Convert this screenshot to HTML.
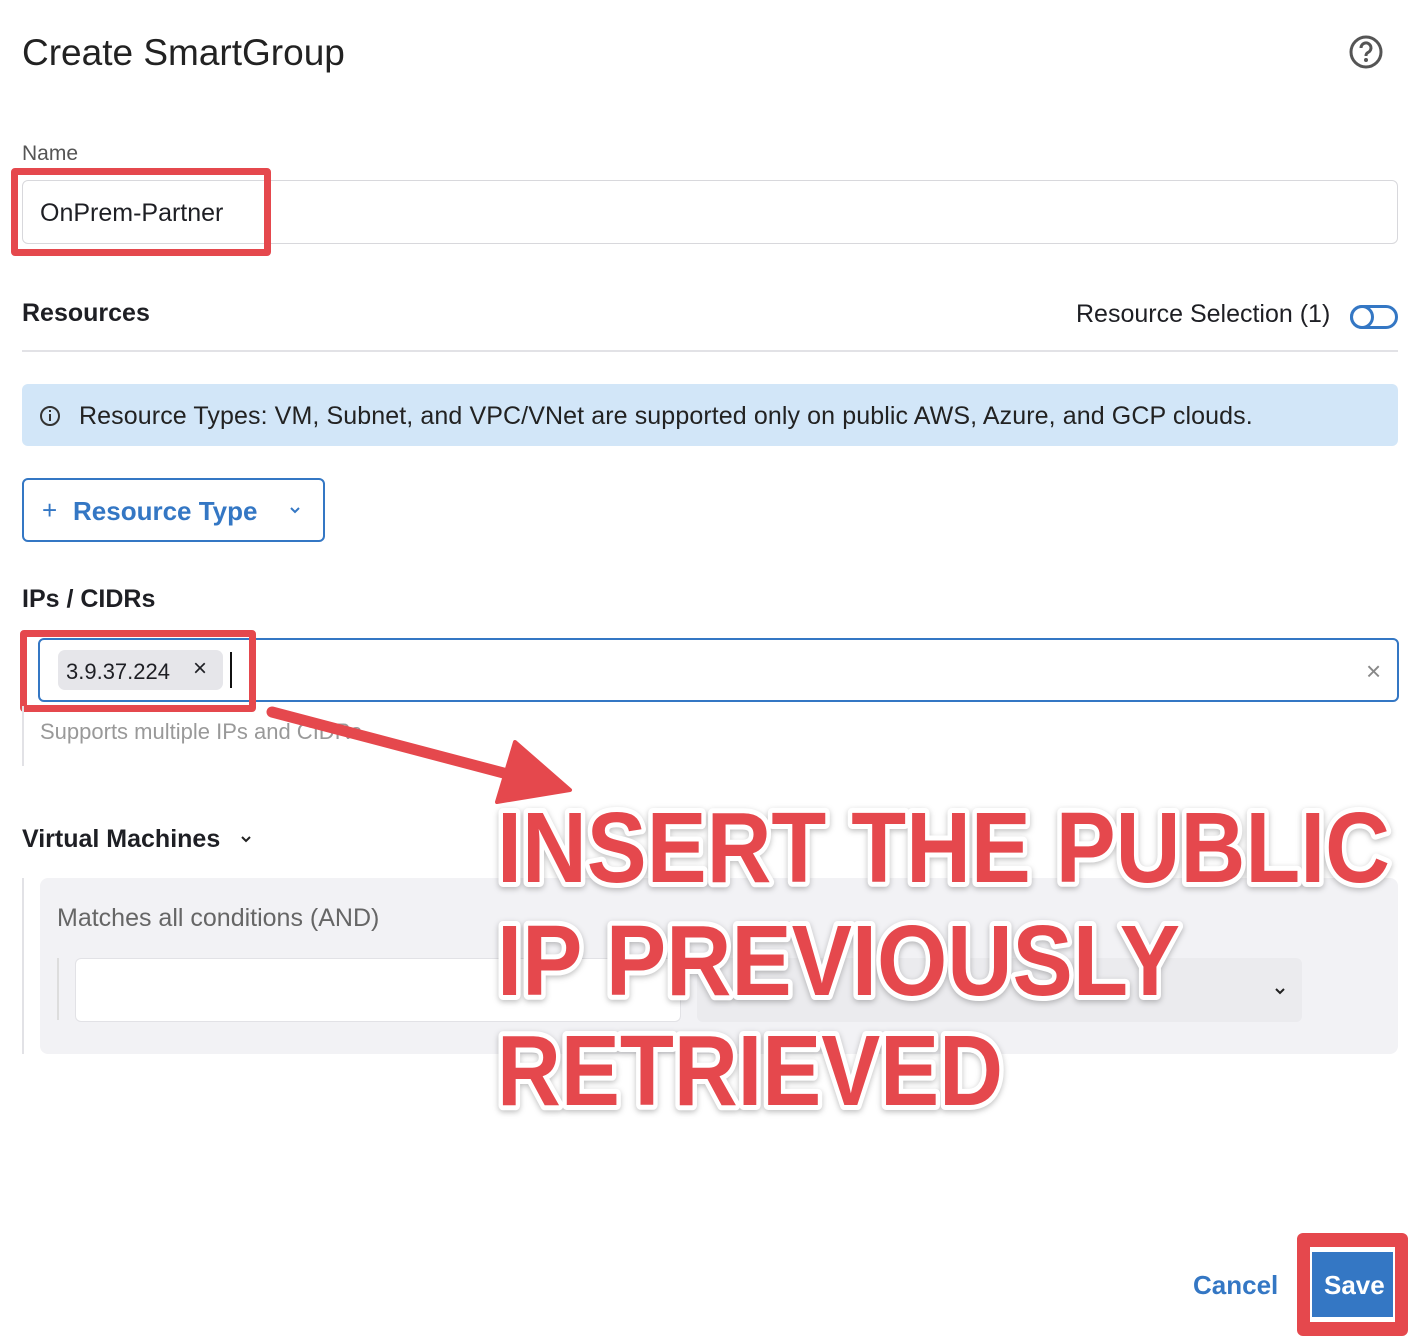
<!DOCTYPE html>
<html><head><meta charset="utf-8"><style>
body{margin:0;width:1414px;height:1336px;background:#fff;font-family:"Liberation Sans",sans-serif;color:#1e1f24;position:relative;overflow:hidden}
.a{position:absolute}
</style></head><body>
<div class="a" style="left:22px;top:32px;font-size:37px;color:#222">Create SmartGroup</div>
<svg class="a" style="left:1348px;top:34px" width="36" height="36" viewBox="0 0 36 36"><circle cx="18" cy="18" r="15" fill="none" stroke="#555" stroke-width="3"/><path d="M13 14a5 5 0 1 1 7 4.5c-1.5.8-2 1.5-2 3.5" fill="none" stroke="#555" stroke-width="3"/><circle cx="18" cy="26" r="2" fill="#555"/></svg>
<div class="a" style="left:22px;top:142px;font-size:21px;color:#555">Name</div>
<div class="a" style="left:22px;top:180px;width:1374px;height:62px;border:1.5px solid #d8d8dc;border-radius:6px"></div>
<div class="a" style="left:11px;top:168px;width:246px;height:74px;border:7px solid #e5484d;border-radius:4px"></div>
<div class="a" style="left:40px;top:199px;font-size:25px">OnPrem-Partner</div>
<div class="a" style="left:22px;top:299px;font-size:25px;font-weight:bold">Resources</div>
<div class="a" style="left:1076px;top:300px;font-size:25px">Resource Selection (1)</div>
<div class="a" style="left:1350px;top:305px;width:42px;height:18px;border:3px solid #3477c4;border-radius:12px"></div>
<div class="a" style="left:1350px;top:305px;width:18px;height:18px;border:3px solid #3477c4;border-radius:50%"></div>
<div class="a" style="left:22px;top:350px;width:1376px;height:2px;background:#e2e2e6"></div>
<div class="a" style="left:22px;top:384px;width:1376px;height:62px;background:#d2e6f8;border-radius:6px"></div>
<svg class="a" style="left:39px;top:405px" width="22" height="22"><circle cx="11" cy="11" r="9" fill="none" stroke="#333" stroke-width="2"/><rect x="10" y="9" width="2" height="7" fill="#333"/><rect x="10" y="5" width="2" height="2" fill="#333"/></svg>
<div class="a" style="left:79px;top:402px;font-size:25px;color:#222;letter-spacing:0.1px">Resource Types: VM, Subnet, and VPC/VNet are supported only on public AWS, Azure, and GCP clouds.</div>
<div class="a" style="left:22px;top:478px;width:299px;height:60px;border:2px solid #3477c4;border-radius:6px"></div>
<div class="a" style="left:42px;top:495px;font-size:26px;color:#3477c4">+</div>
<div class="a" style="left:73px;top:496px;font-size:26px;color:#3477c4;font-weight:bold">Resource Type</div>
<svg class="a" style="left:289px;top:505px" width="12" height="10"><path d="M2 3l4 4 4-4" fill="none" stroke="#3477c4" stroke-width="2"/></svg>
<div class="a" style="left:22px;top:585px;font-size:25px;font-weight:bold">IPs / CIDRs</div>
<div class="a" style="left:38px;top:638px;width:1357px;height:60px;border:2px solid #3477c4;border-radius:6px"></div>
<div class="a" style="left:58px;top:650px;width:165px;height:40px;background:#e6e6ea;border-radius:7px"></div>
<div class="a" style="left:66px;top:659px;font-size:22px">3.9.37.224</div>
<div class="a" style="left:193px;top:655px;font-size:24px">×</div>
<div class="a" style="left:230px;top:652px;width:2px;height:36px;background:#111"></div>
<div class="a" style="left:1366px;top:656px;font-size:26px;color:#888">×</div>
<div class="a" style="left:20px;top:630px;width:222px;height:68px;border:7px solid #e5484d;border-radius:4px"></div>
<div class="a" style="left:22px;top:706px;width:2px;height:60px;background:#e2e2e6"></div>
<div class="a" style="left:40px;top:719px;font-size:22px;color:#999">Supports multiple IPs and CIDRs</div>
<div class="a" style="left:22px;top:825px;font-size:25px;font-weight:bold">Virtual Machines</div>
<svg class="a" style="left:240px;top:834px" width="12" height="10"><path d="M2 3l4 4 4-4" fill="none" stroke="#222" stroke-width="2"/></svg>
<div class="a" style="left:22px;top:878px;width:2px;height:176px;background:#e2e2e6"></div>
<div class="a" style="left:40px;top:878px;width:1358px;height:176px;background:#f2f2f5;border-radius:8px"></div>
<div class="a" style="left:57px;top:904px;font-size:25px;color:#666">Matches all conditions (AND)</div>
<div class="a" style="left:57px;top:958px;width:2px;height:62px;background:#ddd"></div>
<div class="a" style="left:75px;top:958px;width:604px;height:62px;background:#fff;border:1.5px solid #e2e2e6;border-radius:6px"></div>
<div class="a" style="left:697px;top:958px;width:605px;height:64px;background:#ebebee;border-radius:6px"></div>
<svg class="a" style="left:1274px;top:986px" width="12" height="10"><path d="M2 3l4 4 4-4" fill="none" stroke="#222" stroke-width="2"/></svg>
<svg class="a" style="left:0;top:0" width="1414" height="1336">
<line x1="272" y1="712" x2="515" y2="776" stroke="#e5484d" stroke-width="11" stroke-linecap="round"/>
<polygon points="497,802 515,742 570,790" fill="#e5484d" stroke="#e5484d" stroke-width="4" stroke-linejoin="round"/>
<g font-family="Liberation Sans,sans-serif" font-weight="bold" font-size="100" fill="#e5484d" stroke="#fff" stroke-width="10" paint-order="stroke" stroke-linejoin="round" style="filter:drop-shadow(0 2px 3px rgba(0,0,0,.25))">
<text x="497" y="882" textLength="893" lengthAdjust="spacingAndGlyphs">INSERT THE PUBLIC</text>
<text x="497" y="995" textLength="683" lengthAdjust="spacingAndGlyphs">IP PREVIOUSLY</text>
<text x="497" y="1105" textLength="506" lengthAdjust="spacingAndGlyphs">RETRIEVED</text>
</g></svg>
<div class="a" style="left:1193px;top:1270px;font-size:26px;color:#3477c4;font-weight:bold">Cancel</div>
<div class="a" style="left:1297px;top:1233px;width:111px;height:103px;background:#e5484d;border-radius:6px"></div>
<div class="a" style="left:1310px;top:1247px;width:85px;height:75px;background:#fff"></div>
<div class="a" style="left:1312px;top:1252px;width:81px;height:65px;background:#3477c4"></div>
<div class="a" style="left:1324px;top:1270px;font-size:26px;color:#fff;font-weight:bold">Save</div>
</body></html>
